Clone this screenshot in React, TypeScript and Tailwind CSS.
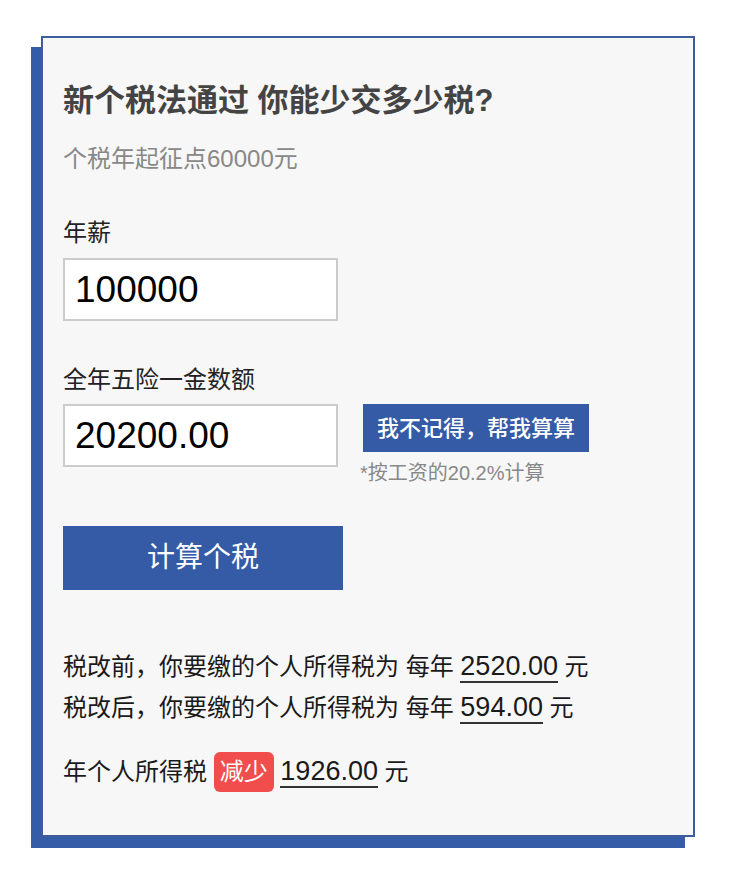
import React from 'react';

const font = "font-['Liberation_Sans','Noto_Sans_CJK_SC',sans-serif]";

const ResultLine = ({ label, amount }: { label: string; amount: string }) => (
  <div className="leading-[41px] text-[24px] text-[#1a1a1a]">
    {label} 每年{' '}
    <span className="inline-block leading-[30px] text-[27px] border-b-2 border-[#333]">{amount}</span> 元
  </div>
);

const App = () => {
  return (
    <div className={`min-h-screen bg-white pt-[36px] pl-[41px] ${font}`}>
      <div className="w-[654px] h-[801px] border-2 border-[#3e5e9b] bg-[#f7f7f7] shadow-[-10px_11px_0_0_#345ca7] px-[20px] pt-[43px]">
        <h1 className="text-[31px] leading-[40px] font-bold text-[#444]">新个税法通过 你能少交多少税?</h1>
        <p className="mt-[22px] text-[24px] leading-[32px] text-[#888]">个税年起征点60000元</p>

        <label className="block mt-[42px] text-[24px] leading-[32px] text-[#222]">年薪</label>
        <input
          defaultValue="100000"
          className="mt-[9px] block w-[275px] h-[63px] border-2 border-[#ccc] bg-white pl-[10px] text-[37px] text-black outline-none"
        />

        <label className="block mt-[43px] text-[24px] leading-[32px] text-[#222]">全年五险一金数额</label>
        <div className="mt-[8px] flex items-start">
          <input
            defaultValue="20200.00"
            className="block w-[275px] h-[63px] border-2 border-[#ccc] bg-white pl-[10px] text-[37px] text-black outline-none"
          />
          <div className="ml-[25px]">
            <button className="w-[226px] h-[48px] bg-[#355ba6] text-white text-[22px] font-medium">
              我不记得，帮我算算
            </button>
            <p className="mt-[9px] -ml-[3px] text-[20px] leading-[24px] text-[#888]">*按工资的20.2%计算</p>
          </div>
        </div>

        <button className="mt-[41px] block w-[280px] h-[64px] bg-[#355ba6] text-white text-[28px]">计算个税</button>

        <div className="mt-[56px]">
          <ResultLine label="税改前，你要缴的个人所得税为" amount="2520.00" />
          <ResultLine label="税改后，你要缴的个人所得税为" amount="594.00" />
          <div className="mt-[23px] leading-[41px] text-[24px] text-[#1a1a1a]">
            年个人所得税{' '}
            <span className="inline-block leading-[40px] px-[6px] rounded-md bg-[#f24d4d] text-white">减少</span>{' '}
            <span className="inline-block leading-[30px] text-[27px] border-b-2 border-[#333]">1926.00</span> 元
          </div>
        </div>
      </div>
    </div>
  );
};

export default App;
